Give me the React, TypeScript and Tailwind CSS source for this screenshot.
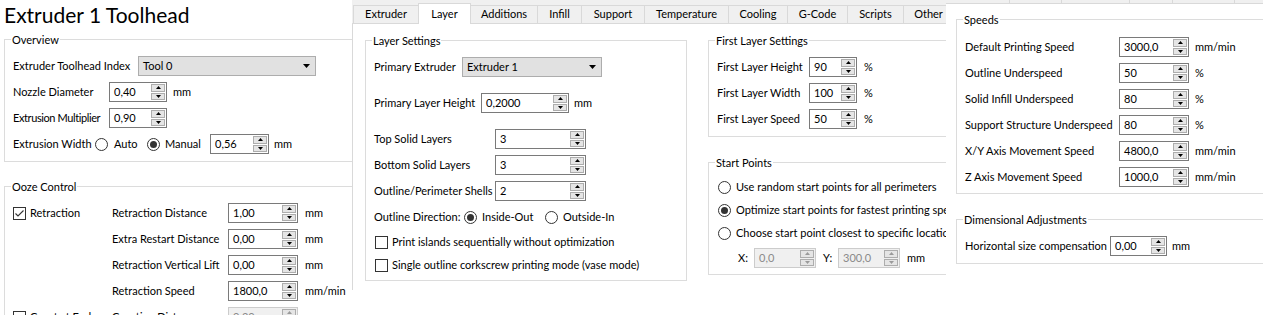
import type { ReactNode } from 'react'

function Tri({ down = false, color = '#000000' }: { down?: boolean; color?: string }) {
  return (
    <svg width="5" height="3" viewBox="0 0 5 3">
      <polygon points={down ? '0,0 5,0 2.5,3' : '0,3 2.5,0 5,3'} fill={color} />
    </svg>
  )
}

function SpinBox({ value, w, disabled = false }: { value: string; w: string; disabled?: boolean }) {
  const arrow = disabled ? '#9a9a9a' : '#000000'
  return (
    <div
      className={`flex h-[20px] shrink-0 border ${w} ${
        disabled ? 'border-[#cccccc] bg-[#f0f0f0] text-[#8a8a8a]' : 'border-[#7a7a7a] bg-white text-black'
      }`}
    >
      <div className="flex flex-1 items-center overflow-hidden pl-[4px]">{value}</div>
      <div className="flex w-[15px] flex-col gap-[1px] py-[1px] pr-[1px]">
        <div className="flex flex-1 items-center justify-center border border-[#adadad] bg-[#e5e5e5]">
          <Tri color={arrow} />
        </div>
        <div className="flex flex-1 items-center justify-center border border-[#adadad] bg-[#e5e5e5]">
          <Tri down color={arrow} />
        </div>
      </div>
    </div>
  )
}

function Combo({ value, w }: { value: string; w: string }) {
  return (
    <div className={`flex h-[20px] shrink-0 items-center justify-between border border-[#adadad] bg-[#e1e1e1] pl-[4px] pr-[5px] ${w}`}>
      <span>{value}</span>
      <svg width="7" height="4" viewBox="0 0 7 4">
        <polygon points="0,0 7,0 3.5,4" fill="#000000" />
      </svg>
    </div>
  )
}

function Radio({ checked = false }: { checked?: boolean }) {
  return (
    <span className="flex h-[13px] w-[13px] shrink-0 items-center justify-center rounded-full border border-[#333333] bg-white">
      {checked && <span className="h-[7px] w-[7px] rounded-full bg-[#333333]" />}
    </span>
  )
}

function Check({ checked = false }: { checked?: boolean }) {
  return (
    <span className="flex h-[13px] w-[13px] shrink-0 items-center justify-center border border-[#333333] bg-white">
      {checked && (
        <svg width="11" height="11" viewBox="0 0 11 11">
          <polyline points="1.5,5.5 4,8 9.5,2.5" fill="none" stroke="#333333" strokeWidth="1.1" />
        </svg>
      )}
    </span>
  )
}

function Group({ title, className, children }: { title: string; className: string; children: ReactNode }) {
  return (
    <div className={`relative shrink-0 border border-[#dcdcdc] ${className}`}>
      <span className="absolute -top-[7px] left-[6px] whitespace-nowrap bg-white px-[1px] leading-[14px]">{title}</span>
      {children}
    </div>
  )
}

function Row({ className = '', children }: { className?: string; children: ReactNode }) {
  return <div className={`flex h-[20px] shrink-0 items-center whitespace-nowrap ${className}`}>{children}</div>
}

const tabs = ['Extruder', 'Layer', 'Additions', 'Infill', 'Support', 'Temperature', 'Cooling', 'G-Code', 'Scripts', 'Other']
const tabWidths = ['w-[65px]', 'w-[53px]', 'w-[67px]', 'w-[44px]', 'w-[63px]', 'w-[84px]', 'w-[59px]', 'w-[60px]', 'w-[56px]', 'w-[50px]']

function LeftPanel() {
  return (
    <div className="h-full w-[352px] shrink-0 overflow-hidden bg-white">
      <div className="flex h-[30px] items-center pl-[4px] text-[21px]">Extruder 1 Toolhead</div>

      <Group title="Overview" className="ml-[4px] mt-[9px] flex w-[360px] flex-col gap-[6px] pb-[7px] pl-[8px] pt-[16px]">
        <Row>
          <span className="w-[125px] shrink-0">Extruder Toolhead Index</span>
          <Combo value="Tool 0" w="w-[178px]" />
        </Row>
        <Row>
          <span className="w-[96px] shrink-0">Nozzle Diameter</span>
          <SpinBox value="0,40" w="w-[58px]" />
          <span className="ml-[6px]">mm</span>
        </Row>
        <Row>
          <span className="w-[96px] shrink-0 tracking-[-0.4px]">Extrusion Multiplier</span>
          <SpinBox value="0,90" w="w-[58px]" />
        </Row>
        <Row>
          <span className="w-[82px] shrink-0">Extrusion Width</span>
          <Radio />
          <span className="ml-[6px] w-[33px] shrink-0">Auto</span>
          <Radio checked />
          <span className="ml-[5px] w-[45px] shrink-0">Manual</span>
          <SpinBox value="0,56" w="w-[59px]" />
          <span className="ml-[5px]">mm</span>
        </Row>
      </Group>

      <Group title="Ooze Control" className="ml-[4px] mt-[24px] flex w-[360px] flex-col gap-[6px] pb-[7px] pl-[8px] pt-[16px]">
        <Row>
          <span className="flex w-[99px] shrink-0 items-center">
            <Check checked />
            <span className="ml-[4px]">Retraction</span>
          </span>
          <span className="w-[116px] shrink-0">Retraction Distance</span>
          <SpinBox value="1,00" w="w-[70px]" />
          <span className="ml-[7px]">mm</span>
        </Row>
        <Row>
          <span className="w-[99px] shrink-0" />
          <span className="w-[116px] shrink-0">Extra Restart Distance</span>
          <SpinBox value="0,00" w="w-[70px]" />
          <span className="ml-[7px]">mm</span>
        </Row>
        <Row>
          <span className="w-[99px] shrink-0" />
          <span className="w-[116px] shrink-0">Retraction Vertical Lift</span>
          <SpinBox value="0,00" w="w-[70px]" />
          <span className="ml-[7px]">mm</span>
        </Row>
        <Row>
          <span className="w-[99px] shrink-0" />
          <span className="w-[116px] shrink-0">Retraction Speed</span>
          <SpinBox value="1800,0" w="w-[70px]" />
          <span className="ml-[7px]">mm/min</span>
        </Row>
        <Row>
          <span className="flex w-[99px] shrink-0 items-center">
            <Check />
            <span className="ml-[4px]">Coast at End</span>
          </span>
          <span className="w-[116px] shrink-0">Coasting Distance</span>
          <SpinBox value="0,20" w="w-[70px]" disabled />
          <span className="ml-[7px]">mm</span>
        </Row>
      </Group>
    </div>
  )
}

function MiddlePanel() {
  return (
    <div className="flex h-full w-[594px] shrink-0 flex-col overflow-hidden bg-white">
      <div className="flex h-[23px] shrink-0 items-end bg-[#f0f0f0] pl-[1px]">
        {tabs.map((t, i) => {
          const selected = t === 'Layer'
          return (
            <div
              key={t}
              className={`flex shrink-0 items-center justify-center border-t border-[#d9d9d9] ${tabWidths[i]} ${
                selected
                  ? 'relative z-10 -mb-[1px] h-[21px] border-x bg-white'
                  : `h-[18px] bg-[#f0f0f0] ${i === 0 ? 'border-l' : ''} ${i === 1 || i === 0 ? '' : 'border-r'} ${i === 2 ? 'border-l-0' : ''}`
              }`}
            >
              {t}
            </div>
          )
        })}
      </div>

      <div className="flex h-[267px] shrink-0 gap-[21px] border-l border-t border-[#d9d9d9] pl-[12px] pt-[16px]">
        <Group title="Layer Settings" className="flex h-fit w-[322px] flex-col pb-[6px] pl-[8px]">
          <Row className="mt-[16px]">
            <span className="w-[88px] shrink-0">Primary Extruder</span>
            <Combo value="Extruder 1" w="w-[140px]" />
          </Row>
          <Row className="mt-[16px]">
            <span className="w-[107px] shrink-0">Primary Layer Height</span>
            <SpinBox value="0,2000" w="w-[88px]" />
            <span className="ml-[5px]">mm</span>
          </Row>
          <Row className="mt-[16px]">
            <span className="w-[121px] shrink-0">Top Solid Layers</span>
            <SpinBox value="3" w="w-[91px]" />
          </Row>
          <Row className="mt-[6px]">
            <span className="w-[121px] shrink-0">Bottom Solid Layers</span>
            <SpinBox value="3" w="w-[91px]" />
          </Row>
          <Row className="mt-[6px]">
            <span className="w-[121px] shrink-0">Outline/Perimeter Shells</span>
            <SpinBox value="2" w="w-[91px]" />
          </Row>
          <Row className="mt-[6px]">
            <span className="w-[90px] shrink-0">Outline Direction:</span>
            <Radio checked />
            <span className="ml-[5px] w-[63px] shrink-0">Inside-Out</span>
            <Radio />
            <span className="ml-[5px]">Outside-In</span>
          </Row>
          <div className="mt-[6px] flex h-[18px] items-center whitespace-nowrap pl-[1px]">
            <Check />
            <span className="ml-[4px]">Print islands sequentially without optimization</span>
          </div>
          <div className="mt-[5px] flex h-[18px] items-center whitespace-nowrap pl-[1px]">
            <Check />
            <span className="ml-[4px]">Single outline corkscrew printing mode (vase mode)</span>
          </div>
        </Group>

        <div className="flex w-[260px] shrink-0 flex-col gap-[25px]">
          <Group title="First Layer Settings" className="flex flex-col gap-[6px] pb-[7px] pl-[8px] pt-[16px]">
            <Row>
              <span className="w-[92px] shrink-0">First Layer Height</span>
              <SpinBox value="90" w="w-[48px]" />
              <span className="ml-[7px]">%</span>
            </Row>
            <Row>
              <span className="w-[92px] shrink-0">First Layer Width</span>
              <SpinBox value="100" w="w-[48px]" />
              <span className="ml-[7px]">%</span>
            </Row>
            <Row>
              <span className="w-[92px] shrink-0">First Layer Speed</span>
              <SpinBox value="50" w="w-[48px]" />
              <span className="ml-[7px]">%</span>
            </Row>
          </Group>

          <Group title="Start Points" className="flex flex-col pb-[6px] pl-[9px] pt-[13px]">
            <div className="flex flex-col gap-[1px]">
              <div className="flex h-[22px] items-center whitespace-nowrap">
                <Radio />
                <span className="ml-[5px]">Use random start points for all perimeters</span>
              </div>
              <div className="flex h-[22px] items-center whitespace-nowrap">
                <Radio checked />
                <span className="ml-[5px]">Optimize start points for fastest printing speed</span>
              </div>
              <div className="flex h-[22px] items-center whitespace-nowrap">
                <Radio />
                <span className="ml-[5px]">Choose start point closest to specific location</span>
              </div>
            </div>
            <Row className="mt-[4px] pl-[20px]">
              <span className="w-[16px] shrink-0">X:</span>
              <SpinBox value="0,0" w="w-[62px]" disabled />
              <span className="ml-[7px] w-[15px] shrink-0">Y:</span>
              <SpinBox value="300,0" w="w-[62px]" disabled />
              <span className="ml-[7px]">mm</span>
            </Row>
          </Group>
        </div>
      </div>
    </div>
  )
}

const speeds = [
  ['Default Printing Speed', '3000,0', 'mm/min'],
  ['Outline Underspeed', '50', '%'],
  ['Solid Infill Underspeed', '80', '%'],
  ['Support Structure Underspeed', '80', '%'],
  ['X/Y Axis Movement Speed', '4800,0', 'mm/min'],
  ['Z Axis Movement Speed', '1000,0', 'mm/min'],
]

function RightPanel() {
  return (
    <div className="flex h-full min-w-0 flex-1 flex-col overflow-hidden bg-white">
      <div className="flex h-[4px] shrink-0 border-b border-[#d9d9d9] bg-[#f0f0f0]">
        <div className="w-[64px] shrink-0 border-r border-[#d9d9d9]" />
        <div className="w-[52px] shrink-0 border-r border-[#d9d9d9]" />
        <div className="w-[68px] shrink-0 border-r border-[#d9d9d9]" />
        <div className="w-[43px] shrink-0 border-r border-[#d9d9d9]" />
        <div className="w-[62px] shrink-0 border-r border-[#d9d9d9]" />
        <div className="flex-1" />
      </div>

      <div className="flex flex-col pl-[10px] pt-[15px]">
        <Group title="Speeds" className="flex w-[330px] flex-col gap-[6px] pb-[6px] pl-[8px] pt-[17px]">
          {speeds.map(([label, value, unit]) => (
            <Row key={label}>
              <span className="w-[154px] shrink-0">{label}</span>
              <SpinBox value={value} w="w-[70px]" />
              <span className="ml-[6px]">{unit}</span>
            </Row>
          ))}
        </Group>

        <Group title="Dimensional Adjustments" className="mt-[25px] flex w-[330px] flex-col pb-[7px] pl-[8px] pt-[16px]">
          <Row>
            <span className="w-[145px] shrink-0">Horizontal size compensation</span>
            <SpinBox value="0,00" w="w-[57px]" />
            <span className="ml-[5px]">mm</span>
          </Row>
        </Group>
      </div>
    </div>
  )
}

export default function App() {
  return (
    <div className="flex h-[315px] w-[1263px] overflow-hidden bg-white font-['Lato',sans-serif] text-[11px] text-black">
      <LeftPanel />
      <MiddlePanel />
      <RightPanel />
    </div>
  )
}
